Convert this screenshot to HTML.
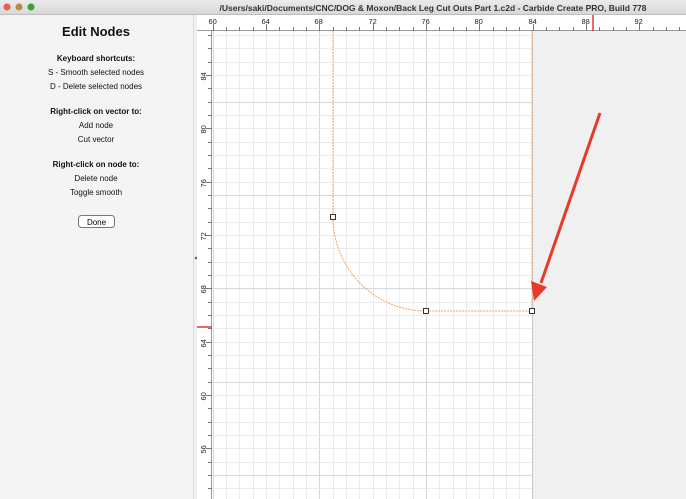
<!DOCTYPE html>
<html><head><style>
html,body{margin:0;width:686px;height:499px;overflow:hidden;font-family:"Liberation Sans",sans-serif;background:#f0f0f0}
svg{display:block}
</style></head><body>
<svg width="686" height="499" xmlns="http://www.w3.org/2000/svg" font-family="Liberation Sans, sans-serif">
<defs>
<linearGradient id="tb" x1="0" y1="0" x2="0" y2="1"><stop offset="0" stop-color="#ebebeb"/><stop offset="1" stop-color="#d6d6d6"/></linearGradient>
</defs>
<rect width="686" height="499" fill="#f0f0f0"/>
<rect x="0" y="15" width="193" height="484" fill="#f4f4f4"/>
<line x1="193.5" y1="15" x2="193.5" y2="499" stroke="#dcdcdc"/>
<circle cx="196" cy="258" r="1.3" fill="#666"/>
<g text-anchor="middle" fill="#111">
<text x="96" y="36" font-size="13" font-weight="bold">Edit Nodes</text>
<text x="96" y="61" font-size="8" font-weight="bold">Keyboard shortcuts:</text>
<text x="96" y="75" font-size="8">S - Smooth selected nodes</text>
<text x="96" y="89" font-size="8">D - Delete selected nodes</text>
<text x="96" y="114" font-size="8" font-weight="bold">Right-click on vector to:</text>
<text x="96" y="128" font-size="8">Add node</text>
<text x="96" y="142" font-size="8">Cut vector</text>
<text x="96" y="167" font-size="8" font-weight="bold">Right-click on node to:</text>
<text x="96" y="181" font-size="8">Delete node</text>
<text x="96" y="195" font-size="8">Toggle smooth</text>
</g>
<rect x="78.5" y="215.5" width="36" height="12" rx="3" fill="#fff" stroke="#777"/>
<text x="96.5" y="225" font-size="8" text-anchor="middle">Done</text>
<rect x="212" y="31" width="320" height="468" fill="#fff"/>
<g id="grid"></g>
<rect x="197" y="15" width="489" height="16" fill="#fff"/>
<line x1="197" y1="30.5" x2="686" y2="30.5" stroke="#9a9a9a"/>
<rect x="197" y="31" width="15" height="468" fill="#fff"/>
<line x1="211.5" y1="31" x2="211.5" y2="499" stroke="#9a9a9a"/>
<line x1="532.5" y1="31" x2="532.5" y2="499" stroke="#c8c8c8"/>
<g id="rul"></g>
<line x1="593" y1="15" x2="593" y2="31" stroke="#e53935" stroke-width="1.5"/>
<line x1="197" y1="327" x2="212" y2="327" stroke="#e53935" stroke-width="1.5"/>
<g fill="none" stroke="#f5a05a" stroke-width="1" stroke-dasharray="2,1">
<path d="M333 31 V217 A93 94 0 0 0 426 311 H532 V31"/>
</g>
<g fill="#fff" stroke="#333" stroke-width="1">
<rect x="330.5" y="214.5" width="5" height="5"/>
<rect x="423.5" y="308.5" width="5" height="5"/>
<rect x="529.5" y="308.5" width="5" height="5"/>
</g>
<line x1="600" y1="113" x2="541" y2="283" stroke="#e8392a" stroke-width="3"/>
<polygon points="534,301 531,281 547,287" fill="#e8392a"/>
<rect x="0" y="0" width="686" height="15" fill="url(#tb)"/>
<line x1="0" y1="14.5" x2="686" y2="14.5" stroke="#bdbdbd"/>
<circle cx="7" cy="7" r="3.5" fill="#ee5b53"/>
<circle cx="19" cy="7" r="3.5" fill="#b98a3e"/>
<circle cx="31" cy="7" r="3.5" fill="#3aa13a"/>
<text x="433" y="11" font-size="8.5" font-weight="bold" text-anchor="middle" fill="#333">/Users/saki/Documents/CNC/DOG &amp; Moxon/Back Leg Cut Outs Part 1.c2d - Carbide Create PRO, Build 778</text>
<script>
var ns="http://www.w3.org/2000/svg",g=document.getElementById('grid'),r=document.getElementById('rul');
function L(p,x1,y1,x2,y2,c){var l=document.createElementNS(ns,'line');l.setAttribute('x1',x1);l.setAttribute('y1',y1);l.setAttribute('x2',x2);l.setAttribute('y2',y2);l.setAttribute('stroke',c);p.appendChild(l);}
function T(p,x,y,s,rot){var t=document.createElementNS(ns,'text');t.setAttribute('x',x);t.setAttribute('y',y);t.setAttribute('font-size','7.5');t.setAttribute('fill','#222');if(rot)t.setAttribute('transform','rotate(-90 '+x+' '+y+')');t.textContent=s;p.appendChild(t);}
var u=13.33;
for(var i=0;i<=35;i++){var x=Math.round(212.7+i*u)+.5;if(x>686)break;if(x<532){L(g,x,31,x,499,(i%8==0)?'#d8d8d8':'#ececec');}
 L(r,x,(i%4==0)?24:27,x,31,'#777');if(i%4==0&&x<675)T(r,x-5,24,String(60+i));}
for(var j=-4;j<=31;j++){var y=Math.round(75+j*u)+.5;if(y<31||y>499)continue;L(g,212,y,532,y,((j-2)%7==0)?'#d8d8d8':'#ececec');
 L(r,(j%4==0)?206:208,y,212,y,'#777');if(j%4==0&&y<490)T(r,206,y+5,String(84-j),true);}
</script>
</svg>
</body></html>
